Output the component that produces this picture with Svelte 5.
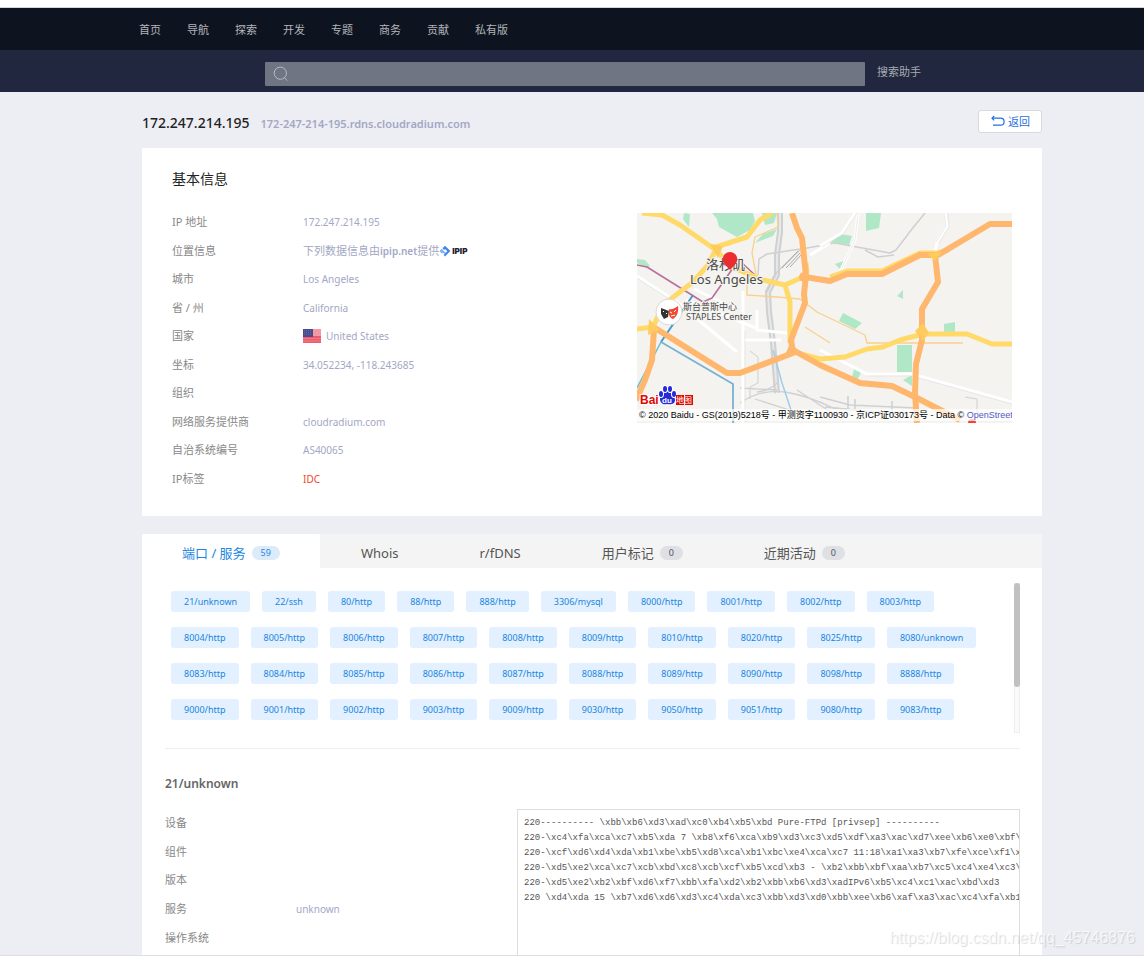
<script>
	const navItems = ['首页', '导航', '探索', '开发', '专题', '商务', '贡献', '私有版'];

	const info = [
		{ label: 'IP 地址', value: '172.247.214.195' },
		{ label: '位置信息', type: 'source' },
		{ label: '城市', value: 'Los Angeles' },
		{ label: '省 / 州', value: 'California' },
		{ label: '国家', value: 'United States', type: 'country' },
		{ label: '坐标', value: '34.052234, -118.243685' },
		{ label: '组织', value: '' },
		{ label: '网络服务提供商', value: 'cloudradium.com' },
		{ label: '自治系统编号', value: 'AS40065' },
		{ label: 'IP标签', value: 'IDC', type: 'tag' }
	];

	const tabs = [
		{ label: '端口 / 服务', count: 59 },
		{ label: 'Whois' },
		{ label: 'r/fDNS' },
		{ label: '用户标记', count: 0 },
		{ label: '近期活动', count: 0 }
	];

	const ports = [
		'21/unknown', '22/ssh', '80/http', '88/http', '888/http', '3306/mysql', '8000/http', '8001/http', '8002/http', '8003/http',
		'8004/http', '8005/http', '8006/http', '8007/http', '8008/http', '8009/http', '8010/http', '8020/http', '8025/http', '8080/unknown',
		'8083/http', '8084/http', '8085/http', '8086/http', '8087/http', '8088/http', '8089/http', '8090/http', '8098/http', '8888/http',
		'9000/http', '9001/http', '9002/http', '9003/http', '9009/http', '9030/http', '9050/http', '9051/http', '9080/http', '9083/http'
	];

	const service = [
		{ label: '设备', value: '' },
		{ label: '组件', value: '' },
		{ label: '版本', value: '' },
		{ label: '服务', value: 'unknown' },
		{ label: '操作系统', value: '' }
	];

	const banner = [
		String.raw`220---------- \xbb\xb6\xd3\xad\xc0\xb4\xb5\xbd Pure-FTPd [privsep] ----------`,
		String.raw`220-\xc4\xfa\xca\xc7\xb5\xda 7 \xb8\xf6\xca\xb9\xd3\xc3\xd5\xdf\xa3\xac\xd7\xee\xb6\xe0\xbf\xc9`,
		String.raw`220-\xcf\xd6\xd4\xda\xb1\xbe\xb5\xd8\xca\xb1\xbc\xe4\xca\xc7 11:18\xa1\xa3\xb7\xfe\xce\xf1\xc6`,
		String.raw`220-\xd5\xe2\xca\xc7\xcb\xbd\xc8\xcb\xcf\xb5\xcd\xb3 - \xb2\xbb\xbf\xaa\xb7\xc5\xc4\xe4\xc3\xfb`,
		String.raw`220-\xd5\xe2\xb2\xbf\xd6\xf7\xbb\xfa\xd2\xb2\xbb\xb6\xd3\xadIPv6\xb5\xc4\xc1\xac\xbd\xd3`,
		String.raw`220 \xd4\xda 15 \xb7\xd6\xd6\xd3\xc4\xda\xc3\xbb\xd3\xd0\xbb\xee\xb6\xaf\xa3\xac\xc4\xfa\xb1\xbb`
	].join('\n');

	let activeTab = 0;
	let query = '';
</script>

<div class="page">
	<nav class="top-nav">
		{#each navItems as item}
			<a href="#nav">{item}</a>
		{/each}
	</nav>

	<div class="search-bar">
		<label class="search-box">
			<svg width="16" height="16" viewBox="0 0 16 16" fill="none" stroke="#b9bcc6" stroke-width="1">
				<circle cx="7.3" cy="7.2" r="6.1" />
				<path d="M11.2 11.4l3 3.2" />
			</svg>
			<input type="text" aria-label="搜索" bind:value={query} />
		</label>
		<a href="#help">搜索助手</a>
	</div>

	<main>
		<header class="title-row">
			<h1>172.247.214.195</h1>
			<span class="rdns">172-247-214-195.rdns.cloudradium.com</span>
			<button class="back" type="button">
				<svg width="14" height="12" viewBox="0 0 14 12" fill="none" stroke="#1f6fe0" stroke-width="1.2">
					<path d="M1 3.2h8.6a3.4 3.4 0 0 1 0 7H2" />
					<path d="M3.2 1L1 3.2l2.2 2.2" />
				</svg>
				返回
			</button>
		</header>

		<section class="card info-card">
			<div class="info-main">
				<h2>基本信息</h2>
				<dl class="info-list">
					{#each info as row}
						<div class="row">
							<dt>{row.label}</dt>
							<dd class={row.type}>
								{#if row.type === 'source'}
									<span>下列数据信息由<b>ipip.net</b>提供</span>
									<svg class="ipip" width="12" height="12" viewBox="0 0 12 12">
										<path d="M.4 6.2l2.2-2.4L7 8 5.7 9.3 4 7.7 3 8.6z" fill="#7fb2f5" />
										<path d="M3.6 3.2L6 .8l5.4 5.2L6 11.4 4.7 10l3.6-3.8L6 4l-1 1z" fill="#3a88ee" />
									</svg>
									<b class="ipip-name">IPIP</b>
								{:else if row.type === 'country'}
									<svg class="flag" width="18" height="14" viewBox="0 0 18 14">
										<rect width="18" height="14" fill="#f5b3bb" />
										<path d="M0 1h18M0 3h18M0 5h18M0 7h18" stroke="#f0808f" stroke-width="1" />
										<rect y="7" width="18" height="7" fill="#ee5c6c" />
										<path d="M0 9.5h18M0 12h18" stroke="#f28a95" stroke-width=".7" />
										<rect width="10" height="8" fill="#4a4c8e" />
										<path d="M1 1.5h8M1 3.5h8M1 5.5h8" stroke="#7a7cb0" stroke-width=".6" stroke-dasharray="1 1" />
									</svg>
									{row.value}
								{:else}
									{row.value}
								{/if}
							</dd>
						</div>
					{/each}
				</dl>
			</div>

			<div class="map">
				<svg viewBox="0 0 375 210" preserveAspectRatio="xMidYMid slice" fill="none" stroke-linejoin="round">
					<rect width="375" height="210" fill="#f4f3f0" />

					<!-- parks -->
					<g fill="#b0e8c7">
						<path d="M75 0l5 6 2 8 18 10 13-7 5-9-2-8z" />
						<path d="M125 0l3 12 9-2 3-10zM118 30l8-9 14-5-4 7-13 5zM47 0l6 1-1 13-6-8z" />
						<path d="M229 0h15l-2 15-13 3zM193 29l10-8 12 2-3 9zM198 51l9-3-4 8zM260 83l6-6v9z" />
						<path d="M206 100l19 10-7 6-16-8zM307 111l11-2v10h-11zM260 132h15v27h-15zM217 156l7 4-4 7-5-3zM266 167l9-5v11z" />
						<path d="M0 46l8 1 5 6-3 2-10-5z" />
					</g>

					<!-- railways -->
					<g stroke="#cfd0d1">
						<path d="M143 0v19l-3 23v20l-9 17 1 20 4 31 4 50" stroke-width="6" />
						<path d="M143 0v19l-3 23v20l-9 17 1 20 4 31 4 50" stroke="#e8e8e8" stroke-width="2" />
						<path d="M121 62l1-16 8-5 40-6 23-4M130 79l10-20 25-24" stroke-width="1.5" />
						<path d="M103 190q20-14 45-11 24 4 48 16l60 6M140 177l-37-2M118 186l50 16M140 170q-8 8-20 9M160 177l35 23" stroke-width="1.3" />
						<path d="M183 32l15-2 55 10 6-3 16-21 13-16M228 37l13 7 16-2" stroke-width="1.5" />
						<path d="M183 184l30 8 66 3M188 194l40 4 43 2M211 183v13M218 186v12M255 188v14" stroke-width="1.6" />
						<path d="M113 138l8 6v26l-8 4v12M328 184l12 2v14" stroke-width="1" />
					</g>
					<path d="M145 55l16-17M149 55l14-15M153 54l12-13" stroke="#aaa" stroke-width="1" />

					<!-- side streets -->
					<g stroke="#fff" stroke-width="3">
						<path d="M0 63l40 26 60 50M106 78v132M57 76l42 20M49 87l70 28M183 33l22-13 13-20M221 0l-3 27-15 32" />
						<path d="M308 0l2 13-10 16-2 10M183 137l47 24h45l100 28M106 127h38M120 97v20l30 3M193 30l-20 12" />
					</g>
					<g stroke="#dedede" stroke-width=".6">
						<path d="M0 65l40 26M108 118v92M203 59l15-32 3-27M185 34l21-13 14-21M230 163h45l100 28M307 0l2 13-10 16M311 0l1 14-10 16" />
					</g>

					<!-- canal and metro -->
					<path d="M136 137l9 33 9 27" stroke="#9fcdec" stroke-width="1.5" />
					<path d="M0 52l10 2 56 35 9-4 21-30M105 50l13 12" stroke="#b8709b" stroke-width="1.6" />
					<path d="M56 82L24 129" stroke="#459bc9" stroke-width="2" />
					<path d="M24 129L0 175" stroke="#6fbfd3" stroke-width="1.6" />
					<path d="M24 129l72 42v39" stroke="#78b2d2" stroke-width="1.8" />

					<!-- minor roads -->
					<g stroke="#f9d08c" stroke-width="1.3">
						<path d="M140 0l1 14-23 10-3 16 4 21M110 70v12l30 2 23 2 17 13 48 23 2 8h96" />
						<path d="M168 114l25 16" />
					</g>

					<!-- main roads -->
					<g stroke="#ffda69" stroke-width="5">
						<path d="M5 0l20 2 18 10 33 23 34-11 13-17 12-7M80 34L71 52 56 69 26 92l-10 22-16 2" />
						<path d="M80 38l14 16 32 13 22 5 18-8M148 72l5 17v41M153 138l30 8 25-2 22-8 16-2 17-7 23-6h44l25 10h20" />
						<path d="M170 60l-1-10M193 64l17-6h35l38-18h18l10-3" />
					</g>
					<g stroke="#ffb76d" stroke-width="6">
						<path d="M155 0l5 15 5 10 4 38-2 18 1 9-14 37 2 13-53 20H90L18 115" />
						<path d="M168 64l25 4 17-7h35l38-19h18l52-31h22M298 42l3 27-16 27v31l-6 24-1 29 2 30" />
						<path d="M156 137l27 15 40 18 32 3 25 12 43 22M17 116l-2 31-7 20-9 20" />
					</g>
					<path d="M73 31l13 2-5 12zM12 106l11 11-12 5zM278 118l8-8 6 10-6 8zM290 40l15-1-7 9z" fill="#ffcb5e" />
					<circle cx="167" cy="64" r="5" fill="#ffb76d" />
					<path d="M148 142l6-14 8 12z" fill="#ffb76d" />

					<!-- places -->
					<g font-family="'Noto Sans', 'Noto Sans CJK SC', sans-serif" fill="#4b4b4b" stroke="#f4f3f0" stroke-width="2" paint-order="stroke">
						<text x="69" y="56" font-size="13">洛杉矶</text>
						<text x="53" y="71" font-size="13">Los Angeles</text>
						<text x="46" y="97" font-size="9">斯台普斯中心</text>
						<text x="49" y="107" font-size="9">STAPLES Center</text>
					</g>
					<circle cx="32" cy="99" r="13" fill="#fff" stroke="#ddd8d5" />
					<path d="M24 95l8 3-1 6-4 2-3-5z" fill="#333" />
					<path d="M32 96c3 1 6-1 9-3 1 5-1 11-5 13-4-1-5-6-4-10z" fill="#f04a32" />
					<path d="M33 99l2 1M37 99l2-2M34 103l4-1M26 98l1 1M29 100l1 1" stroke="#fff" />
					<path d="M93 57l-5.5-6a7.3 7.3 0 1 1 11 0z" fill="#ec2d30" />

					<!-- map provider logo -->
					<g stroke="#fff" stroke-width="2" paint-order="stroke" font-family="'Liberation Sans', 'Noto Sans CJK SC', sans-serif" font-weight="bold">
						<text x="3" y="191" font-size="12" fill="#e10601">Bai</text>
						<path d="M23 186c0-4 4-8 7-8s8 5 8 9-4 5-8 4c-4 1-7-1-7-5z" fill="#2529d8" />
						<ellipse cx="24" cy="181" rx="2" ry="3" fill="#2529d8" />
						<ellipse cx="28" cy="176" rx="2" ry="3" fill="#2529d8" />
						<ellipse cx="33" cy="176" rx="2" ry="3" fill="#2529d8" />
						<ellipse cx="37" cy="181" rx="2" ry="3" fill="#2529d8" />
						<text x="25" y="190" font-size="8" fill="#fff" stroke="none">du</text>
						<path d="M39 182h8v10h-8zM48 182h8v10h-8z" fill="#e10601" stroke="none" />
						<text x="39" y="190" font-size="8" font-weight="normal" fill="#fff" stroke="none">地图</text>
					</g>
					<path d="M331 210a4 4 0 0 1 8 0z" fill="#ee4433" />
				</svg>
				<div class="credit">© 2020 Baidu - GS(2019)5218号 - 甲测资字1100930 - 京ICP证030173号 - Data © <a href="#osm">OpenStreet</a></div>
			</div>
		</section>

		<section class="card service-card">
			<div class="tabs" role="tablist">
				{#each tabs as tab, i}
					<button type="button" role="tab" aria-selected={activeTab === i} class:active={activeTab === i} on:click={() => (activeTab = i)}>
						{tab.label}
						{#if tab.count !== undefined}
							<span class="badge">{tab.count}</span>
						{/if}
					</button>
				{/each}
			</div>

			<div class="service-body">
				<div class="ports">
					<div class="port-list">
						{#each ports as port}
							<a class="port" href="#port">{port}</a>
						{/each}
					</div>
					<div class="scroll-track"><div class="scroll-thumb"></div></div>
				</div>

				<div class="detail">
					<div class="detail-main">
						<h3>21/unknown</h3>
						<dl>
							{#each service as row}
								<div class="row">
									<dt>{row.label}</dt>
									<dd>{row.value}</dd>
								</div>
							{/each}
						</dl>
					</div>
					<pre>{banner}</pre>
				</div>
			</div>
		</section>
	</main>

	<div class="watermark">https://blog.csdn.net/qq_45746876</div>
</div>

<style>
	:global(body) {
		margin: 0;
		background: #edeef4;
	}

	.page {
		position: relative;
		box-sizing: border-box;
		border-top: 7px solid #fff;
		border-bottom: 1px solid #e0dbe6;
		background: #edeef4;
		font-family: 'Noto Sans', 'Noto Sans CJK SC', sans-serif;
		font-size: 11px;
		color: #888;
		overflow: hidden;
	}

	a {
		color: inherit;
		text-decoration: none;
	}

	h1, h2, h3, dl, dd, pre {
		margin: 0;
	}

	button {
		font-family: inherit;
		cursor: pointer;
	}

	.top-nav {
		display: flex;
		align-items: center;
		gap: 26px;
		height: 42px;
		padding-left: 139px;
		border-top: 1px solid #d5d6da;
		background: #0d1420;
		color: #b3b5b9;
	}

	.search-bar {
		display: flex;
		align-items: center;
		gap: 12px;
		height: 42px;
		padding: 0 223px 0 265px;
		box-sizing: border-box;
		background: #20273f;
		color: #a9abb2;
	}

	.search-box {
		display: flex;
		align-items: center;
		flex: 1;
		height: 24px;
		margin-top: 6px;
		padding-left: 8px;
		border-radius: 1px;
		background: #707583;
	}

	.search-box input {
		flex: 1;
		min-width: 0;
		border: 0;
		outline: 0;
		background: transparent;
		color: #fff;
	}

	main {
		padding: 0 102px 0 142px;
	}

	.title-row {
		display: flex;
		align-items: center;
		gap: 11px;
		height: 56px;
		padding-bottom: 1px;
		box-sizing: border-box;
	}

	h1 {
		font-size: 14px;
		font-weight: 500;
		color: #222;
		padding-top: 6px;
	}

	.rdns {
		padding-top: 7px;
		font-size: 11px;
		font-weight: 600;
		color: #a3a7c4;
	}

	.back {
		display: flex;
		align-items: center;
		gap: 3px;
		height: 23px;
		margin: 4px 0 0 auto;
		padding: 0 11px 1px 12px;
		border: 1px solid #d9d9d9;
		border-radius: 3px;
		background: #fff;
		color: #1f6fe0;
		font-size: 11px;
	}

	.card {
		background: #fff;
	}

	.info-card {
		display: flex;
		justify-content: space-between;
		margin-bottom: 18px;
		padding: 20px 30px 23px;
	}

	.info-main {
		flex: 1;
	}

	h2 {
		font-size: 14px;
		font-weight: 400;
		line-height: 22px;
		color: #222;
	}

	dl {
		display: grid;
		grid-auto-rows: 1fr;
	}

	.info-list {
		height: 285px;
		margin-top: 18px;
	}

	.row {
		display: flex;
		align-items: center;
		line-height: 16px;
	}

	dt {
		width: 131px;
	}

	dd {
		display: flex;
		align-items: center;
		font-size: 10px;
		color: #a3a7c4;
	}

	.source {
		font-size: 11px;
	}

	.source b {
		font-size: 10px;
		font-weight: 600;
	}

	.source .ipip-name {
		margin-left: 1px;
		color: #1d2230;
		font-family: Inter, sans-serif;
		font-size: 8px;
		font-weight: 900;
	}

	.flag {
		margin-right: 5px;
	}

	.tag {
		color: #f5491f;
	}

	.map {
		position: relative;
		width: 375px;
		height: 210px;
		margin-top: 45px;
		overflow: hidden;
	}

	.map > svg {
		display: block;
		width: 100%;
		height: 100%;
	}

	.credit {
		position: absolute;
		left: 0;
		right: 0;
		bottom: 2px;
		padding-left: 2px;
		background: rgba(255, 255, 255, 0.7);
		color: #000;
		font-family: 'Liberation Sans', 'Noto Sans CJK SC', sans-serif;
		font-size: 9px;
		line-height: 12px;
		white-space: nowrap;
	}

	.credit a {
		color: #5558c8;
	}

	.tabs {
		display: flex;
		gap: 1px;
		background: #f4f4f4;
	}

	.tabs button {
		display: flex;
		align-items: center;
		gap: 6px;
		height: 34px;
		padding: 3px 40px 0;
		border: 0;
		background: transparent;
		color: #555;
		font-size: 13px;
	}

	.tabs .active {
		border-radius: 2px 2px 0 0;
		background: #fff;
		color: #1a86e0;
	}

	.badge {
		padding: 0 9px;
		border-radius: 7px;
		background: #dee0e5;
		color: #555;
		font-size: 9px;
		line-height: 14px;
	}

	.active .badge {
		background: #dcebf9;
		color: #1a86e0;
	}

	.service-body {
		padding: 15px 22px 0 23px;
	}

	.ports {
		display: flex;
		height: 150px;
		padding-bottom: 15px;
		border-bottom: 1px solid #eee;
	}

	.port-list {
		display: flex;
		flex: 1;
		flex-wrap: wrap;
		align-content: flex-start;
		gap: 15px 12px;
		padding: 8px 12px 0 6px;
	}

	.port {
		padding: 0 13px;
		border-radius: 3px;
		background: #e2f0ff;
		color: #1a86e0;
		font-size: 9px;
		line-height: 21px;
	}

	.scroll-track {
		width: 4px;
		border: 1px solid #eee;
		background: #fafafa;
	}

	.scroll-thumb {
		width: 6px;
		height: 104px;
		margin: -1px;
		border-radius: 3px;
		background: #c1c1c1;
	}

	.detail {
		display: flex;
		align-items: flex-end;
	}

	.detail-main {
		width: 352px;
		flex: none;
		padding-bottom: 3px;
	}

	h3 {
		margin: 25px 0 15px;
		font-size: 12px;
		font-weight: 600;
		line-height: 20px;
		color: #666;
	}

	.detail dl {
		height: 143px;
	}

	pre {
		flex: 1;
		min-width: 0;
		box-sizing: border-box;
		height: 146px;
		padding: 6px 0 0 6px;
		border: 1px solid #ddd;
		border-bottom: 0;
		overflow: hidden;
		color: #555;
		font-family: 'Liberation Mono', monospace;
		font-size: 9px;
		line-height: 15px;
	}

	.watermark {
		position: absolute;
		right: 9px;
		bottom: 8px;
		color: rgba(255, 255, 255, 0.7);
		font-family: 'Liberation Sans', sans-serif;
		font-size: 16px;
		line-height: 18px;
		text-shadow: 1px 1px 1px rgba(130, 130, 140, 0.3);
	}
</style>
